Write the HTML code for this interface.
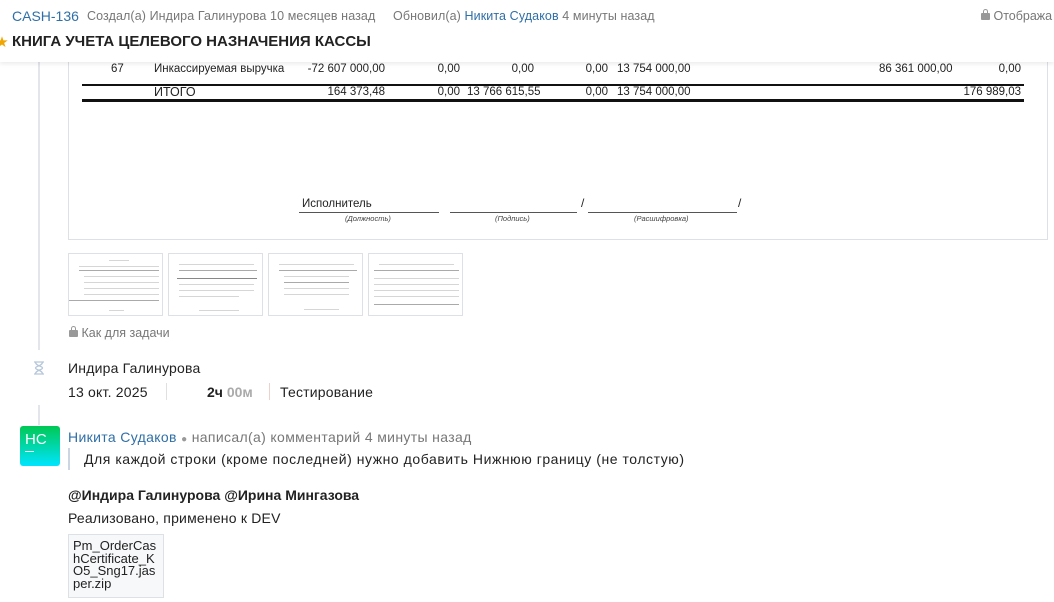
<!DOCTYPE html>
<html><head><meta charset="utf-8"><style>
*{margin:0;padding:0;box-sizing:border-box}
body{width:1054px;height:602px;overflow:hidden;background:#fff;font-family:"Liberation Sans","Noto Sans CJK SC",sans-serif;color:#222;position:relative}
.a{position:absolute;white-space:nowrap}
.hdr{position:absolute;left:0;top:0;width:1054px;height:62px;background:#fff;box-shadow:0 2px 4px rgba(0,0,0,.08);z-index:5}
.t{font-size:11.5px;color:#222}
.r{text-align:right}
.thumb{position:absolute;top:253px;width:95px;height:63px;border:1px solid #dde1e6;background:#fff;overflow:hidden}
.thumb i{position:absolute;height:1px;background:#d6d6d6}
.lock{display:inline-block;width:9px;height:7px;background:#999;border-radius:1px;position:relative;margin-top:4px}
.lock:before{content:"";position:absolute;left:2px;top:-4px;width:3px;height:4px;border:1px solid #999;border-bottom:none;border-radius:3px 3px 0 0}
</style></head><body>
<div class="hdr">
 <div class="a" style="left:12px;top:8px;font-size:14px;color:#2f6fa7">CASH-136</div>
 <div class="a" style="left:87px;top:9px;font-size:12.5px;color:#777;letter-spacing:0.1px">Создал(а) Индира Галинурова 10 месяцев назад</div>
 <div class="a" style="left:393px;top:9px;font-size:12.5px;color:#777;letter-spacing:0.1px">Обновил(а) <span style="color:#2f6fa7">Никита Судаков</span> 4 минуты назад</div>
 <div class="a" style="left:981px;top:9px;font-size:12.5px;color:#777"><span class="lock"></span> Отобража</div>
 <div class="a" style="left:-4px;top:33px;font-size:12px;color:#f0a500">★</div>
 <div class="a" style="left:12px;top:33px;font-size:15px;font-weight:bold;color:#222">КНИГА УЧЕТА ЦЕЛЕВОГО НАЗНАЧЕНИЯ КАССЫ</div>
</div>
<div class="a" style="left:38px;top:62px;width:2px;height:288px;background:#e2e6ec"></div>
<div class="a" style="left:38px;top:405px;width:2px;height:20px;background:#e2e6ec"></div>
<div class="a" style="left:68px;top:50px;width:980px;height:190px;border:1px solid #dde1e6;border-top:none"></div>
<div class="a t" style="left:111px;top:63px">67</div>
<div class="a t" style="left:154px;top:63px">Инкассируемая выручка</div>
<div class="a t r" style="left:300px;top:63px;width:85px">-72 607 000,00</div>
<div class="a t r" style="left:400px;top:63px;width:60px">0,00</div>
<div class="a t r" style="left:470px;top:63px;width:64px">0,00</div>
<div class="a t r" style="left:560px;top:63px;width:48px">0,00</div>
<div class="a t" style="left:617px;top:63px">13 754 000,00</div>
<div class="a t" style="left:879px;top:63px">86 361 000,00</div>
<div class="a t r" style="left:960px;top:63px;width:61px">0,00</div>
<div class="a" style="left:82px;top:84px;width:942px;height:2px;background:#111"></div>
<div class="a" style="left:154px;top:85px;font-size:12.5px">ИТОГО</div>
<div class="a t r" style="left:300px;top:86px;width:85px">164 373,48</div>
<div class="a t r" style="left:400px;top:86px;width:60px">0,00</div>
<div class="a t" style="left:467px;top:86px">13 766 615,55</div>
<div class="a t r" style="left:560px;top:86px;width:48px">0,00</div>
<div class="a t" style="left:617px;top:86px">13 754 000,00</div>
<div class="a t r" style="left:900px;top:86px;width:121px">176 989,03</div>
<div class="a" style="left:82px;top:99px;width:942px;height:1px;background:#111"></div>
<div class="a" style="left:82px;top:100px;width:942px;height:2px;background:#111"></div>
<div class="a" style="left:302px;top:198px;font-size:11.5px">Исполнитель</div>
<div class="a" style="left:299px;top:212px;width:140px;height:1px;background:#555"></div>
<div class="a" style="left:450px;top:212px;width:127px;height:1px;background:#555"></div>
<div class="a" style="left:588px;top:212px;width:149px;height:1px;background:#555"></div>
<div class="a" style="left:581px;top:196px;font-size:12px">/</div>
<div class="a" style="left:738px;top:196px;font-size:12px">/</div>
<div class="a" style="left:345px;top:214px;font-size:7.5px;font-style:italic;color:#444">(Должность)</div>
<div class="a" style="left:495px;top:214px;font-size:7.5px;font-style:italic;color:#444">(Подпись)</div>
<div class="a" style="left:634px;top:214px;font-size:7.5px;font-style:italic;color:#444">(Расшифровка)</div>

<div class="thumb" style="left:68px"><i style="left:40px;top:6px;width:20px"></i><i style="left:10px;top:12px;width:80px"></i><i style="left:10px;top:16px;width:80px;background:#aaa"></i><i style="left:15px;top:22px;width:75px"></i><i style="left:15px;top:28px;width:75px"></i><i style="left:15px;top:34px;width:75px"></i><i style="left:15px;top:40px;width:75px"></i><i style="left:0px;top:46px;width:90px;background:#aaa"></i><i style="left:40px;top:56px;width:15px"></i></div>
<div class="thumb" style="left:168px"><i style="left:10px;top:10px;width:75px"></i><i style="left:10px;top:16px;width:78px;background:#aaa"></i><i style="left:8px;top:24px;width:80px;background:#888"></i><i style="left:10px;top:30px;width:75px"></i><i style="left:10px;top:36px;width:75px"></i><i style="left:10px;top:42px;width:60px"></i><i style="left:30px;top:56px;width:40px"></i></div>
<div class="thumb" style="left:268px"><i style="left:10px;top:10px;width:75px"></i><i style="left:10px;top:16px;width:78px;background:#aaa"></i><i style="left:15px;top:22px;width:65px"></i><i style="left:15px;top:28px;width:65px;background:#aaa"></i><i style="left:15px;top:34px;width:65px"></i><i style="left:15px;top:40px;width:65px"></i><i style="left:35px;top:55px;width:35px"></i></div>
<div class="thumb" style="left:368px"><i style="left:10px;top:10px;width:75px"></i><i style="left:5px;top:16px;width:85px;background:#aaa"></i><i style="left:5px;top:24px;width:85px"></i><i style="left:5px;top:30px;width:85px"></i><i style="left:5px;top:36px;width:85px"></i><i style="left:5px;top:42px;width:85px"></i><i style="left:5px;top:50px;width:85px;background:#aaa"></i></div>

<div class="a" style="left:69px;top:326px;font-size:12.5px;color:#777"><span class="lock"></span> Как для задачи</div>
<svg class="a" style="left:33px;top:361px" width="12" height="14" viewBox="0 0 12 14"><path d="M1 1h10M1 13h10M2.5 1c0 4 7 4 7 6s-7 2-7 6M9.5 1c0 4-7 4-7 6s7 2 7 6" fill="none" stroke="#b6c7da" stroke-width="1.3"/></svg>
<div class="a" style="left:68px;top:360px;font-size:14px;letter-spacing:0.2px">Индира Галинурова</div>
<div class="a" style="left:68px;top:384px;font-size:14px;letter-spacing:0.2px">13 окт. 2025</div>
<div class="a" style="left:166px;top:383px;width:1px;height:17px;background:#e0e0e0"></div>
<div class="a" style="left:207px;top:384px;font-size:14px"><b>2ч</b> <b style="color:#aaa">00м</b></div>
<div class="a" style="left:269px;top:383px;width:1px;height:17px;background:#f0d0cc"></div>
<div class="a" style="left:280px;top:384px;font-size:14px;letter-spacing:0.2px">Тестирование</div>

<div class="a" style="left:20px;top:426px;width:40px;height:40px;border-radius:3px;background:linear-gradient(#00c853,#00e5ff);color:#fff;font-size:15px;padding:5px 0 0 5px">НС<div style="width:9px;height:1px;background:#fff;margin-top:3px"></div></div>
<div class="a" style="left:68px;top:429px;font-size:14px;color:#2f6fa7;letter-spacing:0.35px">Никита Судаков <span style="color:#999;font-size:10px">●</span> <span style="color:#777">написал(а) комментарий 4 минуты назад</span></div>
<div class="a" style="left:68px;top:448px;width:2px;height:22px;background:#ccd6e2"></div>
<div class="a" style="left:84px;top:451px;font-size:14px;letter-spacing:0.55px">Для каждой строки (кроме последней) нужно добавить Нижнюю границу (не толстую)</div>
<div class="a" style="left:68px;top:487px;font-size:14px;font-weight:bold">@Индира Галинурова @Ирина Мингазова</div>
<div class="a" style="left:68px;top:510px;font-size:14px;letter-spacing:0.2px">Реализовано, применено к DEV</div>
<div class="a" style="left:68px;top:534px;width:96px;height:64px;border:1px solid #dde1e6;background:#f7f8fa;font-size:13px;line-height:12.5px;padding:5px 4px;white-space:normal;word-break:break-all">Pm_OrderCashCertificate_KO5_Sng17.jasper.zip</div>
</body></html>
